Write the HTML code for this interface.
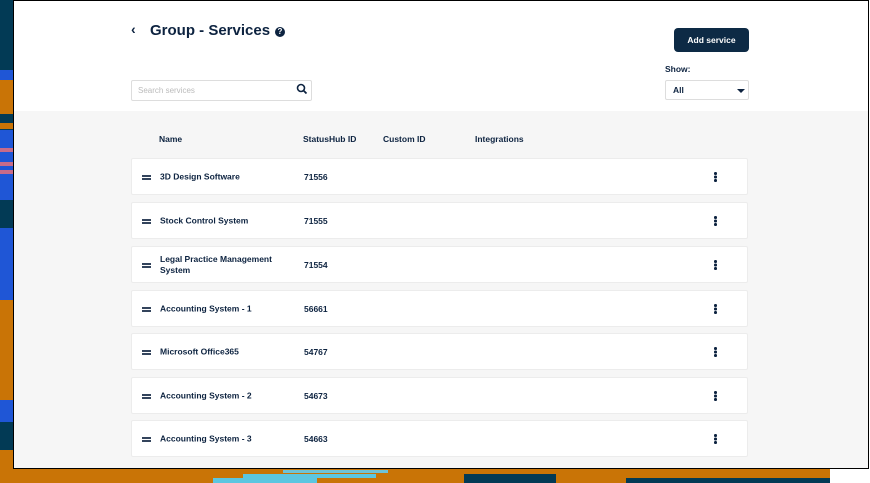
<!DOCTYPE html>
<html><head><style>
*{margin:0;padding:0;box-sizing:border-box}
body{width:870px;height:483px;position:relative;background:#fff;font-family:"Liberation Sans",sans-serif;color:#0d2340;overflow:hidden}
.s{position:absolute}
.frame{position:absolute;left:13px;top:0;width:856px;height:469px;border:1px solid #000;background:#fff;overflow:hidden}
.gray{position:absolute;left:0;top:110px;width:100%;height:360px;background:#f6f6f6}
.card{position:absolute;left:117px;width:617px;height:37px;background:#fff;border:1px solid #ececec;border-radius:2px;font-size:8.5px;font-weight:bold}
.card .h{position:absolute;left:10px;top:16px;width:9px;height:1.5px;background:#33445c;box-shadow:0 3px 0 #33445c}
.card .n{position:absolute;left:28px;top:50%;transform:translateY(-50%);line-height:11px;width:120px}
.card .id{position:absolute;left:172px;top:50%;transform:translateY(-50%)}
.card .d{position:absolute;left:582px;top:13px;width:2.5px;height:2.5px;background:#0d2340;border-radius:50%;box-shadow:0 3.5px 0 #0d2340,0 7px 0 #0d2340}
.th{position:absolute;top:133px;font-size:8.5px;font-weight:bold}
</style></head><body>
<div class="s" style="left:0;top:0;width:13px;height:483px;background:#023a55"></div>
<div class="s" style="left:0;top:70px;width:13px;height:10px;background:#1f56d6"></div>
<div class="s" style="left:0;top:80px;width:13px;height:34px;background:#c97406"></div>
<div class="s" style="left:0;top:123px;width:13px;height:6px;background:#c97406"></div>
<div class="s" style="left:0;top:130px;width:13px;height:70px;background:#1f56d6"></div>
<div class="s" style="left:0;top:148px;width:13px;height:4px;background:#c86b8a"></div>
<div class="s" style="left:0;top:162px;width:13px;height:4px;background:#c86b8a"></div>
<div class="s" style="left:0;top:170px;width:13px;height:4px;background:#c86b8a"></div>
<div class="s" style="left:0;top:228px;width:13px;height:72px;background:#1f56d6"></div>
<div class="s" style="left:0;top:300px;width:13px;height:100px;background:#c97406"></div>
<div class="s" style="left:0;top:400px;width:13px;height:22px;background:#1f56d6"></div>
<div class="s" style="left:0;top:450px;width:13px;height:33px;background:#c97406"></div>
<div class="s" style="left:0;top:469px;width:830px;height:14px;background:#c97406"></div>
<div class="s" style="left:464px;top:474px;width:92px;height:9px;background:#023a55"></div>
<div class="s" style="left:626px;top:478px;width:204px;height:5px;background:#023a55"></div>
<div class="s" style="left:283px;top:470px;width:105px;height:3px;background:#6fc3d6"></div>
<div class="s" style="left:243px;top:474px;width:133px;height:4px;background:#5cc6e0"></div>
<div class="s" style="left:213px;top:478px;width:104px;height:5px;background:#5cc6e0"></div>
<div class="frame">
<div class="gray"></div>
<div class="s" style="left:117px;top:20px;font-size:14px;font-weight:bold">&#8249;</div>
<div class="s" style="left:136px;top:21px;font-size:15px;font-weight:bold">Group - Services</div>
<div class="s" style="left:261px;top:26px;width:10px;height:10px;border-radius:50%;background:#0d2340;color:#fff;font-size:8px;font-weight:bold;text-align:center;line-height:10px">?</div>
<div class="s" style="left:660px;top:27px;width:75px;height:24px;background:#0d2a45;border-radius:4px;color:#fff;font-size:8.5px;font-weight:bold;text-align:center;line-height:24px">Add service</div>
<div class="s" style="left:117px;top:79px;width:181px;height:21px;border:1px solid #ddd;border-radius:2px;background:#fff;font-size:8px;color:#bbb;padding:5px 6px">Search services</div>
<svg class="s" style="left:282px;top:82px" width="12" height="12" viewBox="0 0 12 12"><circle cx="5" cy="5" r="3.5" fill="none" stroke="#0d2340" stroke-width="1.6"/><path d="M7.5 7.5L10.5 10.5" stroke="#0d2340" stroke-width="1.8"/></svg>
<div class="s" style="left:651px;top:63px;font-size:8.5px;font-weight:bold">Show:</div>
<div class="s" style="left:651px;top:79px;width:84px;height:20px;border:1px solid #ddd;border-radius:2px;background:#fff;font-size:8.5px;font-weight:bold;padding:4px 7px">All</div>
<div class="s" style="left:723px;top:88px;border-left:4px solid transparent;border-right:4px solid transparent;border-top:4px solid #0d2340"></div>
<div class="th" style="left:145px">Name</div>
<div class="th" style="left:289px">StatusHub ID</div>
<div class="th" style="left:369px">Custom ID</div>
<div class="th" style="left:461px">Integrations</div>
<div class="card" style="top:157px"><div class="h"></div><div class="n">3D Design Software</div><div class="id">71556</div><div class="d"></div></div>
<div class="card" style="top:201px"><div class="h"></div><div class="n">Stock Control System</div><div class="id">71555</div><div class="d"></div></div>
<div class="card" style="top:245px"><div class="h"></div><div class="n">Legal Practice Management System</div><div class="id">71554</div><div class="d"></div></div>
<div class="card" style="top:289px"><div class="h"></div><div class="n">Accounting System - 1</div><div class="id">56661</div><div class="d"></div></div>
<div class="card" style="top:332px"><div class="h"></div><div class="n">Microsoft Office365</div><div class="id">54767</div><div class="d"></div></div>
<div class="card" style="top:376px"><div class="h"></div><div class="n">Accounting System - 2</div><div class="id">54673</div><div class="d"></div></div>
<div class="card" style="top:419px"><div class="h"></div><div class="n">Accounting System - 3</div><div class="id">54663</div><div class="d"></div></div>
</div>
</body></html>
